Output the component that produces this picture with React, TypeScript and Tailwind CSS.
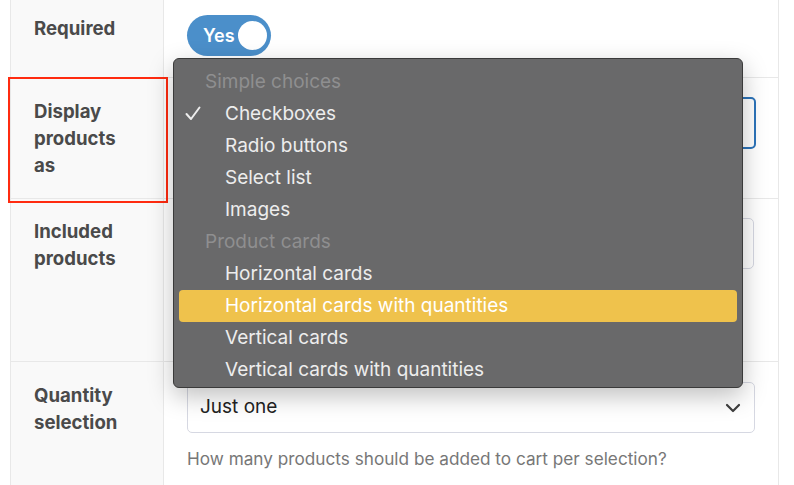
import React from "react";

const menuItems: { label: string; header?: boolean; checked?: boolean; active?: boolean }[] = [
  { label: "Simple choices", header: true },
  { label: "Checkboxes", checked: true },
  { label: "Radio buttons" },
  { label: "Select list" },
  { label: "Images" },
  { label: "Product cards", header: true },
  { label: "Horizontal cards" },
  { label: "Horizontal cards with quantities", active: true },
  { label: "Vertical cards" },
  { label: "Vertical cards with quantities" },
];

const Label: React.FC<{ children: React.ReactNode }> = ({ children }) => (
  <div className="text-[18.6px] leading-[27px] font-bold text-[#4a4a4a]">{children}</div>
);

const Chevron = () => (
  <svg width="16" height="10" viewBox="0 0 16 10" fill="none">
    <path d="M2 2l6 6 6-6" stroke="#3f3f3f" strokeWidth="2.2" strokeLinecap="round" strokeLinejoin="round" />
  </svg>
);

const App: React.FC = () => {
  return (
    <div
      className="relative w-[794px] h-[485px] overflow-hidden bg-white"
      style={{ fontFamily: "Inter, 'Liberation Sans', sans-serif" }}
    >
      <div className="ml-[10px] w-[769px] border-l border-r border-[#e8e8e8]">
        {/* Required */}
        <div className="flex h-[78px] border-b border-[#e8e8e8]">
          <div className="w-[153px] shrink-0 bg-[#f9f9f9] border-r border-[#e8e8e8] pl-[23px] pt-[15px]">
            <Label>Required</Label>
          </div>
          <div className="flex-1 pl-[23px] pt-[15px]">
            <div className="flex items-center w-[84px] h-[41px] rounded-full bg-[#4b8fca] pl-[16px] pr-[4px]">
              <span className="text-white font-semibold text-[18px]">Yes</span>
              <span className="ml-auto w-[29px] h-[29px] rounded-full bg-white" />
            </div>
          </div>
        </div>

        {/* Display products as */}
        <div className="flex h-[121px] border-b border-[#e8e8e8]">
          <div className="w-[153px] shrink-0 bg-[#f9f9f9] border-r border-[#e8e8e8] pl-[23px] pt-[20px]">
            <Label>
              Display
              <br />
              products
              <br />
              as
            </Label>
          </div>
          <div className="flex-1 pl-[23px] pr-[22px] pt-[19px]">
            <div className="h-[52px] rounded-[5px] border-2 border-[#2c74ba] bg-white" />
          </div>
        </div>

        {/* Included products */}
        <div className="flex h-[163px] border-b border-[#e8e8e8]">
          <div className="w-[153px] shrink-0 bg-[#f9f9f9] border-r border-[#e8e8e8] pl-[23px] pt-[19px]">
            <Label>
              Included
              <br />
              products
            </Label>
          </div>
          <div className="flex-1 pl-[23px] pr-[24px] pt-[19px]">
            <div className="h-[51px] rounded-[5px] border border-[#d6d8e2] bg-white" />
          </div>
        </div>

        {/* Quantity selection */}
        <div className="flex h-[130px]">
          <div className="w-[153px] shrink-0 bg-[#f9f9f9] border-r border-[#e8e8e8] pl-[23px] pt-[20px]">
            <Label>
              Quantity
              <br />
              selection
            </Label>
          </div>
          <div className="flex-1 pl-[23px] pr-[23px] pt-[20px]">
            <div className="flex items-center h-[51px] rounded-[5px] border border-[#d6d8e2] bg-white pl-[12px] pr-[13px]">
              <span className="text-[19px] text-[#222]">Just one</span>
              <span className="ml-auto">
                <Chevron />
              </span>
            </div>
            <div className="mt-[13px] text-[17.2px] text-[#777]">
              How many products should be added to cart per selection?
            </div>
          </div>
        </div>
      </div>

      {/* red highlight */}
      <div className="absolute left-[8px] top-[77px] w-[160px] h-[126px] border-2 border-[#ff2b10] pointer-events-none" />

      {/* dropdown menu */}
      <div className="absolute left-[173px] top-[58px] w-[570px] h-[330px] rounded-[6px] border border-[#3a3a3a] bg-[#69696a] pt-[7px] px-[5px] shadow-[0_8px_24px_rgba(0,0,0,0.25)]">
        {menuItems.map((item) => (
          <div
            key={item.label}
            className={
              "relative flex items-center h-[32px] rounded-[4px] text-[19px] " +
              (item.active ? "bg-[#efc24c] text-white " : "") +
              (item.header ? "pl-[26px] text-[#8f8f90]" : "pl-[46px] text-[#ededed]")
            }
          >
            {item.checked && (
              <svg className="absolute left-[6px] top-[8px]" width="16" height="15" viewBox="0 0 16 15" fill="none">
                <path d="M1.5 8l4.5 5L14.5 1.5" stroke="#ededed" strokeWidth="2" strokeLinecap="round" strokeLinejoin="round" />
              </svg>
            )}
            {item.label}
          </div>
        ))}
      </div>
    </div>
  );
};

export default App;
